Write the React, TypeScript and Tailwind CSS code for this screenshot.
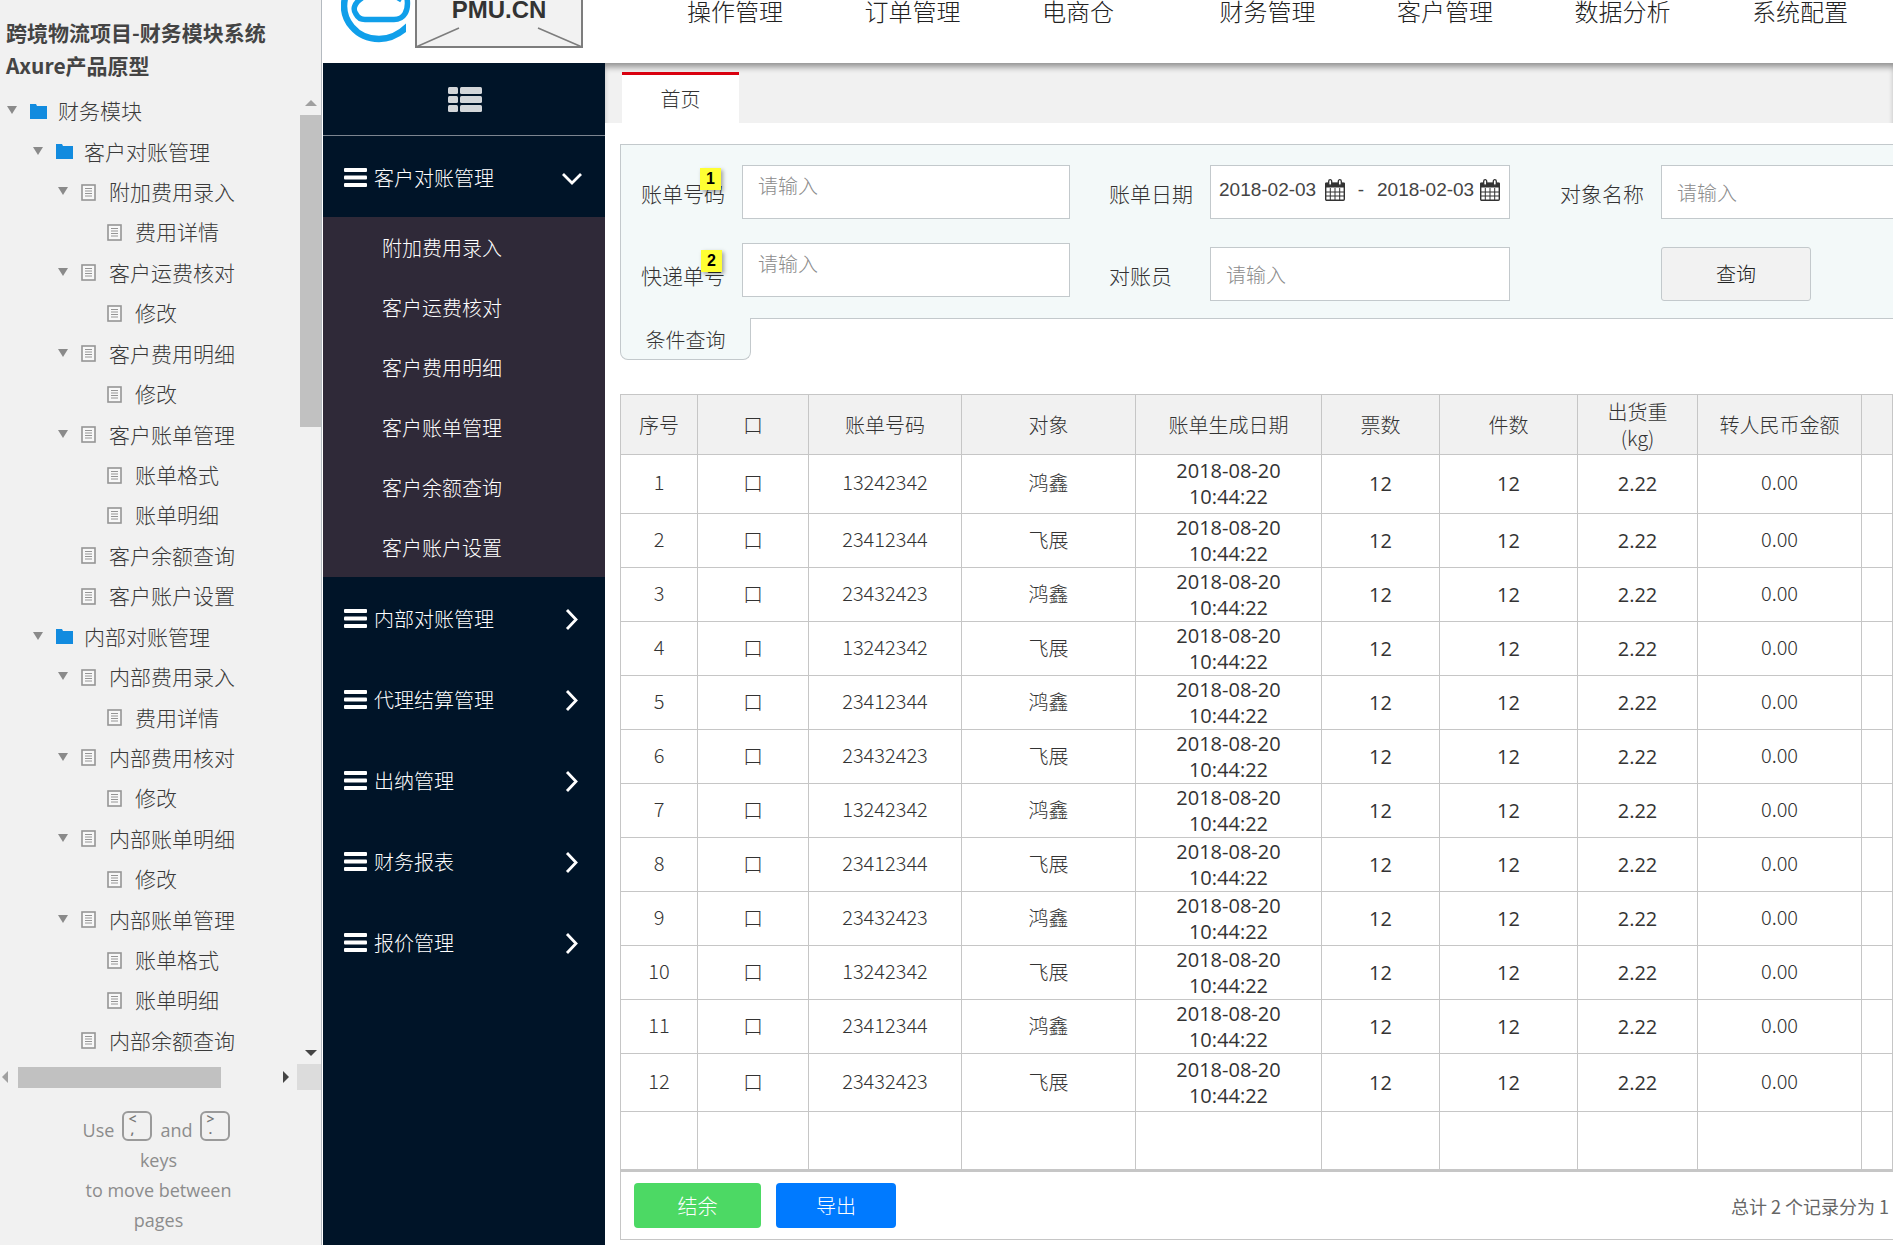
import React from "react";

type TreeItem = { level: number; label: string; kind: "folder" | "page"; open?: boolean };

const tree: TreeItem[] = [
  { level: 0, label: "财务模块", kind: "folder", open: true },
  { level: 1, label: "客户对账管理", kind: "folder", open: true },
  { level: 2, label: "附加费用录入", kind: "page", open: true },
  { level: 3, label: "费用详情", kind: "page" },
  { level: 2, label: "客户运费核对", kind: "page", open: true },
  { level: 3, label: "修改", kind: "page" },
  { level: 2, label: "客户费用明细", kind: "page", open: true },
  { level: 3, label: "修改", kind: "page" },
  { level: 2, label: "客户账单管理", kind: "page", open: true },
  { level: 3, label: "账单格式", kind: "page" },
  { level: 3, label: "账单明细", kind: "page" },
  { level: 2, label: "客户余额查询", kind: "page" },
  { level: 2, label: "客户账户设置", kind: "page" },
  { level: 1, label: "内部对账管理", kind: "folder", open: true },
  { level: 2, label: "内部费用录入", kind: "page", open: true },
  { level: 3, label: "费用详情", kind: "page" },
  { level: 2, label: "内部费用核对", kind: "page", open: true },
  { level: 3, label: "修改", kind: "page" },
  { level: 2, label: "内部账单明细", kind: "page", open: true },
  { level: 3, label: "修改", kind: "page" },
  { level: 2, label: "内部账单管理", kind: "page", open: true },
  { level: 3, label: "账单格式", kind: "page" },
  { level: 3, label: "账单明细", kind: "page" },
  { level: 2, label: "内部余额查询", kind: "page" },
];

const indents = ["pl-[7px]", "pl-[33px]", "pl-[58px]", "pl-[84px]"];

const topNav = ["操作管理", "订单管理", "电商仓", "财务管理", "客户管理", "数据分析", "系统配置"];
const subMenu = ["附加费用录入", "客户运费核对", "客户费用明细", "客户账单管理", "客户余额查询", "客户账户设置"];
const menu = ["内部对账管理", "代理结算管理", "出纳管理", "财务报表", "报价管理"];
const headers = ["序号", "口", "账单号码", "对象", "账单生成日期", "票数", "件数", "出货重(kg)", "转人民币金额", ""];
const numbers = ["13242342", "23412344", "23432423"];
const rows = Array.from({ length: 12 }, (_, i) => ({
  id: i + 1,
  bill: numbers[i % 3],
  target: i % 2 === 0 ? "鸿鑫" : "飞展",
}));

function Triangle({ dir, className }: { dir: "up" | "down" | "left" | "right"; className: string }) {
  const points = {
    up: "0,10 5,0 10,10",
    down: "0,0 10,0 5,10",
    left: "10,0 10,10 0,5",
    right: "0,0 10,5 0,10",
  }[dir];
  return (
    <svg viewBox="0 0 10 10" preserveAspectRatio="none" className={className} aria-hidden="true">
      <polygon points={points} fill="currentColor" />
    </svg>
  );
}

function FolderIcon() {
  return (
    <svg width="17" height="15" viewBox="0 0 17 15" aria-hidden="true">
      <path d="M0 0h6l1 2h10v13H0z" fill="#128bdf" />
    </svg>
  );
}

function PageIcon() {
  return (
    <svg width="15" height="17" viewBox="0 0 15 17" fill="none" stroke="#959595" aria-hidden="true">
      <rect x="1" y="1" width="13" height="15" strokeWidth="1.6" fill="#f8f8f8" />
      <path d="M4 4.5h7M4 7h7M4 9.5h7M4 12h7" strokeWidth="1.1" />
    </svg>
  );
}

function Keycap({ top, bottom }: { top: string; bottom: string }) {
  return (
    <kbd className="mb-1 inline-flex h-[30px] w-[30px] shrink-0 flex-col items-start rounded-md border-2 border-[#9a9a9a] pt-px pl-1 font-['Open_Sans',sans-serif] text-sm leading-[10px] font-semibold text-[#777]">
      <span>{top}</span>
      <span className="pl-0.5">{bottom}</span>
    </kbd>
  );
}

function TreePane() {
  return (
    <aside className="flex w-[322px] shrink-0 flex-col border-r border-[#b4bac0] bg-[#f1f1f1]">
      <h1 className="px-[6px] pt-4 pb-2 text-[21px] leading-[33px] font-bold text-[#444]">
        跨境物流项目-财务模块系统
        <br />
        Axure产品原型
      </h1>
      <div className="flex min-h-0 flex-1">
        <ul className="flex min-w-0 flex-1 flex-col pb-1">
          {tree.map((item, i) => (
            <li key={i} className={`flex flex-1 items-center ${indents[item.level]}`}>
              {item.open ? (
                <Triangle dir="down" className="h-2 w-2.5 shrink-0 text-[#8a8a8a]" />
              ) : (
                <span className="w-2.5 shrink-0" />
              )}
              <a href="#" className="flex items-center text-[21px] leading-8 font-light text-[#3a3a3a]">
                <span className="ml-[13px] w-7 pt-0.5">{item.kind === "folder" ? <FolderIcon /> : <PageIcon />}</span>
                {item.label}
              </a>
            </li>
          ))}
        </ul>
        <div className="flex w-[21px] flex-col items-center pt-2.5 pb-2">
          <Triangle dir="up" className="h-1.5 w-3 text-[#a0a0a0]" />
          <div className="mt-[9px] h-[312px] w-full bg-[#c1c1c1]" />
          <Triangle dir="down" className="mt-auto h-1.5 w-3 text-[#444]" />
        </div>
      </div>
      <div className="flex h-[26px] items-center">
        <Triangle dir="left" className="ml-0.5 h-3 w-1.5 text-[#a0a0a0]" />
        <div className="ml-2.5 h-[21px] w-[203px] bg-[#c1c1c1]" />
        <Triangle dir="right" className="mr-2 ml-auto h-3 w-1.5 text-[#444]" />
        <div className="h-full w-6 bg-[#dcdcdc]" />
      </div>
      <p className="pt-[25px] pr-[66px] pb-2.5 pl-[62px] text-center font-['Open_Sans',sans-serif] text-lg leading-[30px] text-[#8c8c8c]">
        <span className="flex h-[30px] items-end justify-center gap-2 pr-1">
          Use <Keycap top="<" bottom="," /> and <Keycap top=">" bottom="." />
        </span>
        keys
        <br />
        <span className="whitespace-nowrap">to move between</span>
        <br />
        pages
      </p>
    </aside>
  );
}

function Logo() {
  return (
    <a href="#" className="flex shrink-0 items-start" aria-label="PMU.CN">
      <svg width="74" height="48" viewBox="0 0 74 48" fill="none" stroke="#109fea" aria-hidden="true">
        <clipPath id="ring">
          <rect x="0" y="0" width="65" height="48" />
        </clipPath>
        <path clipPath="url(#ring)" d="M4 -2C-1 20 16 39 38 39c10 0 20-4 30-14" strokeWidth="6.5" />
        <path d="M21 -2C12 4 12 10 15 14c2 4 5 5.500 9 5.500h29C63 19.500 68 11 66 -2" strokeWidth="5.500" />
        <path d="M55 -2l5 3" strokeWidth="3" />
      </svg>
      <span className="relative flex h-12 w-[168px] justify-center bg-[#f2f2f2]">
        <svg className="absolute inset-0" width="168" height="48" viewBox="0 0 168 48" fill="none" stroke="#7d7d7d" aria-hidden="true">
          <path d="M1 0V47H167V0" strokeWidth="2" />
          <path d="M1 47L44 28M167 47L123 28" strokeWidth="1.500" />
        </svg>
        <span className="relative -mt-1 font-['Liberation_Sans',sans-serif] text-2xl leading-7 font-bold text-[#333]">PMU.CN</span>
      </span>
    </a>
  );
}

function Bars() {
  return (
    <svg width="23" height="19" viewBox="0 0 23 19" fill="currentColor" aria-hidden="true">
      <rect width="23" height="4" rx="1" />
      <rect y="7.500" width="23" height="4" rx="1" />
      <rect y="15" width="23" height="4" rx="1" />
    </svg>
  );
}

function MenuButton({ label, open }: { label: string; open?: boolean }) {
  return (
    <button
      type="button"
      aria-expanded={!!open}
      className="flex h-[81px] w-full items-center pt-0.5 pr-[22px] pl-[21px] text-xl font-light text-white"
    >
      <Bars />
      <span className="ml-[7px]">{label}</span>
      <svg
        className="ml-auto"
        width="22"
        height="22"
        viewBox="0 0 22 22"
        fill="none"
        stroke="currentColor"
        strokeWidth="2.800"
        aria-hidden="true"
      >
        {open ? <path d="M2 7l9 9 9-9" /> : <path d="M6 2l9 9.500-9 9.500" />}
      </svg>
    </button>
  );
}

function SideMenu() {
  return (
    <nav className="flex w-[282px] shrink-0 flex-col bg-[#001428]">
      <button
        type="button"
        aria-label="菜单"
        className="flex h-[73px] shrink-0 items-center justify-center border-b border-[#7c8590] pt-0.5 pl-0.5"
      >
        <svg width="34" height="26" viewBox="0 0 34 26" fill="#d3d6d9" aria-hidden="true">
          {[0, 9, 18].map((y) => (
            <g key={y}>
              <rect x="0" y={y} width="10" height="7" rx="1.500" />
              <rect x="12" y={y} width="22" height="7" rx="1.500" />
            </g>
          ))}
        </svg>
      </button>
      <MenuButton label="客户对账管理" open />
      <ul className="bg-[#2f2938]">
        {subMenu.map((s) => (
          <li key={s}>
            <a href="#" className="flex h-[60px] items-center pt-0.5 pl-[59px] text-xl font-light text-white">
              {s}
            </a>
          </li>
        ))}
      </ul>
      {menu.map((m) => (
        <MenuButton key={m} label={m} />
      ))}
    </nav>
  );
}

function CalendarIcon() {
  return (
    <svg width="20" height="22" viewBox="0 0 20 22" fill="none" stroke="#333" aria-hidden="true">
      <path d="M0 4.500q0-1 1-1h18q1 0 1 1V8.500H0z" fill="#333" stroke="none" />
      <rect x="0.700" y="4.500" width="18.600" height="16.800" rx="1" strokeWidth="1.400" />
      <path d="M5.300 9v12M10 9v12M14.700 9v12M1 13h18M1 17h18" strokeWidth="1" />
      <rect x="3.700" y="0.700" width="3" height="5.500" rx="1.500" fill="#fff" strokeWidth="1.300" />
      <rect x="13.300" y="0.700" width="3" height="5.500" rx="1.500" fill="#fff" strokeWidth="1.300" />
    </svg>
  );
}

const box = "h-[54px] border border-[#c3c9cc] bg-white px-[15px] text-xl font-light text-[#333] placeholder:text-[#8c8c8c]";
const label = "relative shrink-0 text-[21px] font-light text-[#333]";
const badge =
  "absolute z-10 flex h-[22px] w-[21px] items-center justify-center bg-[#ffff33] font-['Liberation_Sans',sans-serif] text-base font-bold text-black shadow-[2px_2px_4px_rgba(0,0,0,0.35)]";

function SearchPanel() {
  return (
    <form className="shrink-0">
      <div className="flex border-y border-l border-[#c3c9cc] bg-[#f3f9f9] pt-5 pb-[17px] pl-5">
        <div className="flex shrink-0 flex-col gap-6">
          <div className="flex items-center">
            <label htmlFor="bill" className={`${label} w-[101px] pt-1`}>
              账单号码
              <span className={`${badge} -top-1.5 left-[59px]`}>1</span>
            </label>
            <input id="bill" placeholder="请输入" className={`${box} w-[328px] pb-3.5`} />
          </div>
          <div className="flex items-center">
            <label htmlFor="express" className={`${label} w-[101px] pt-3`}>
              快递单号
              <span className={`${badge} top-0.5 left-[60px]`}>2</span>
            </label>
            <input id="express" placeholder="请输入" className={`${box} w-[328px] pb-3.5`} />
          </div>
        </div>
        <div className="ml-[39px] flex shrink-0 flex-col gap-7">
          <div className="flex items-center">
            <label htmlFor="from" className={`${label} w-[101px] pt-1`}>
              账单日期
            </label>
            <div className="flex h-[54px] w-[300px] items-center border border-[#c3c9cc] bg-white pb-1 pl-2 font-['Liberation_Sans',sans-serif] text-[19px] text-[#444]">
              <input id="from" defaultValue="2018-02-03" className="w-[106px]" />
              <button type="button" aria-label="选择开始日期">
                <CalendarIcon />
              </button>
              <span className="w-8 text-center">-</span>
              <input aria-label="结束日期" defaultValue="2018-02-03" className="w-[103px]" />
              <button type="button" aria-label="选择结束日期">
                <CalendarIcon />
              </button>
            </div>
          </div>
          <div className="flex items-center">
            <label htmlFor="clerk" className={`${label} w-[101px] pt-1`}>
              对账员
            </label>
            <input id="clerk" placeholder="请输入" className={`${box} w-[300px]`} />
          </div>
        </div>
        <div className="ml-[50px] flex min-w-0 flex-1 flex-col gap-7">
          <div className="flex items-center">
            <label htmlFor="target" className={`${label} w-[101px] pt-1`}>
              对象名称
            </label>
            <input id="target" placeholder="请输入" className={`${box} w-0 flex-1 border-r-0`} />
          </div>
          <button
            type="button"
            className="ml-[101px] h-[54px] w-[150px] rounded-[3px] border border-[#c3c9cc] bg-[#f2f2f2] text-xl font-light text-[#222]"
          >
            查询
          </button>
        </div>
      </div>
      <div className="relative -mt-px flex h-[42px] w-[131px] items-center justify-center rounded-b-lg border border-t-0 border-[#c3c9cc] bg-[#f3f9f9] pt-0.5 text-xl font-light text-[#333]">
        条件查询
      </div>
    </form>
  );
}

const figure = "font-['Open_Sans',sans-serif]";

function BillTable() {
  return (
    <table className="w-full table-fixed border-collapse text-center text-xl leading-[26px] text-[#333] [&_td]:border [&_td]:border-[#c6c6c6] [&_td]:px-0 [&_td]:pt-0 [&_th]:border [&_th]:border-[#c6c6c6] [&_th]:p-0">
      <colgroup>
        <col className="w-[77px]" />
        <col className="w-[111px]" />
        <col className="w-[153px]" />
        <col className="w-[174px]" />
        <col className="w-[186px]" />
        <col className="w-[118px]" />
        <col className="w-[138px]" />
        <col className="w-[120px]" />
        <col className="w-[164px]" />
        <col />
      </colgroup>
      <thead>
        <tr className="h-[60px] bg-[#f1f1f1]">
          {headers.map((h, i) => (
            <th key={i} scope="col" className="font-light">
              {h === "出货重(kg)" ? (
                <>
                  出货重
                  <br />
                  (kg)
                </>
              ) : (
                h
              )}
            </th>
          ))}
        </tr>
      </thead>
      <tbody>
        {rows.map((r) => (
          <tr key={r.id} className={r.id === 1 ? "h-[59px]" : r.id === 12 ? "h-[58px]" : "h-[54px]"}>
            <td className="pb-1 font-light">{r.id}</td>
            <td className="pb-0.5 font-light">口</td>
            <td className="pb-1 font-light">{r.bill}</td>
            <td className="pb-0.5 font-light">{r.target}</td>
            <td className={figure}>
              2018-08-20
              <br />
              10:44:22
            </td>
            <td className={figure}>12</td>
            <td className={figure}>12</td>
            <td className={figure}>2.22</td>
            <td className="pb-1 font-light">0.00</td>
            <td />
          </tr>
        ))}
        <tr className="h-[58px]">
          {headers.map((_, i) => (
            <td key={i} />
          ))}
        </tr>
      </tbody>
    </table>
  );
}

export default function App() {
  return (
    <div className="flex h-screen overflow-hidden bg-white font-['Noto_Sans_CJK_SC',sans-serif]">
      <TreePane />
      <div className="ml-px flex min-w-0 flex-1 flex-col">
        <header className="flex h-[63px] shrink-0 items-start bg-white pl-[18px]">
          <Logo />
          <nav className="ml-[104px] flex flex-1 justify-between pr-[45px]">
            {topNav.map((n) => (
              <a key={n} href="#" className="-mt-[5px] w-24 text-2xl leading-8 font-light whitespace-nowrap text-[#222]">
                {n}
              </a>
            ))}
          </nav>
        </header>
        <div className="flex min-h-0 flex-1">
          <SideMenu />
          <main className="flex min-w-0 flex-1 flex-col overflow-hidden">
            <div className="flex h-[60px] shrink-0 items-end bg-[#f1f1f1] pl-[17px] shadow-[inset_0_6px_6px_-2px_rgba(0,0,0,0.4)]">
              <button type="button" className="h-[51px] w-[117px] border-t-[3px] border-[#d9000f] bg-white text-xl font-light text-[#333]">
                首页
              </button>
            </div>
            <div className="flex flex-col pt-[21px] pl-[15px]">
              <SearchPanel />
              <div className="mt-[34px]">
                <BillTable />
                <div className="flex h-[70px] items-center gap-[15px] border-t-2 border-b border-l border-[#c6c6c6] pl-[13px]">
                  <button type="button" className="h-[45px] w-[127px] rounded bg-[#4cd964] text-xl font-light text-white">
                    结余
                  </button>
                  <button type="button" className="h-[45px] w-[120px] rounded bg-[#007aff] text-xl font-light text-white">
                    导出
                  </button>
                  <span className="ml-auto pr-1 text-lg text-[#666]">总计 2 个记录分为 1</span>
                </div>
              </div>
            </div>
          </main>
        </div>
      </div>
    </div>
  );
}
